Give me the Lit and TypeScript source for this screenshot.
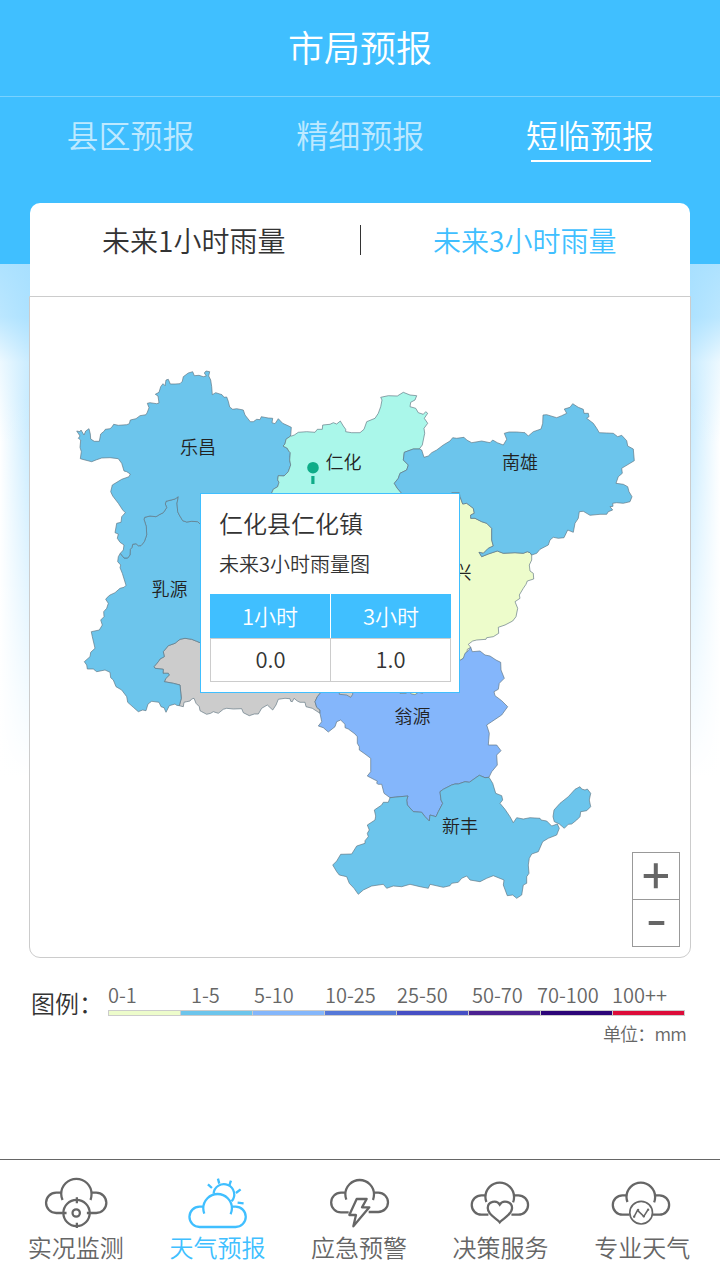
import { LitElement, html, svg, css } from "lit";
import { customElement, property } from "lit/decorators.js";

const sheet = (ox: number, oy: number, pts: string) =>
  pts.trim().split(/\s+/).map((p) => {
    const [x, y] = p.split(",").map(Number);
    return `${(ox + x / 3).toFixed(1)},${(oy + y / 3).toFixed(1)}`;
  }).join(" ");

const turn = (pts: string) => pts.trim().split(/\s+/).reverse().join(" ");

// Shared borders
const lechangRenhua = sheet(60, 360, "692,228 678,238 675,252 669,258 682,265 686,273 691,278 689,300 692,315 685,335 672,348 655,347 653,360 657,367 653,380 640,388 635,399 610,430");
const lechangRuyuan = sheet(60, 360, "440,500 420,492 413,485 395,484 380,486 368,482 358,465 353,455 351,430 355,410 345,417 318,424 316,432 320,443 310,458 300,463 288,470 270,468 254,472 252,478 259,500 260,525 253,545 243,557 235,557 228,551 218,553 216,562 211,568 210,585 203,594 192,594 181,580");
const ruyuanCity = sheet(60, 540, "358,497 364,475 360,435 340,430 313,425 318,415 328,405 325,400 309,400 310,388 285,385 282,380 295,365 300,357 313,350 310,335 325,317 345,310 360,298 375,295 395,298 410,304 420,308 440,312");
const renhuaNanxiong = sheet(260, 370, "478,237 460,237 433,247 430,270 445,285 440,300 420,310 415,325 403,340 412,355 425,370 445,390");
const shixingNanxiong = sheet(440, 390, "30,330 35,308 58,308 60,320 68,342 80,340 100,355 103,370 92,375 92,385 105,385 125,395 140,400 155,415 155,450 160,468 145,475 130,490 117,487 125,500 145,492 172,483 190,490 225,488 250,490 262,485 270,488 275,495");
const cityWengyuan = sheet(300, 630, "60,250 60,240 50,232 45,215 52,200 62,188 70,160");
const wengyuanXinfeng = sheet(310, 750, "537,82 525,83 508,76 495,85 478,97 465,95 445,102 435,102 425,105 400,118 390,125 393,150 398,160 385,185 378,200 360,195 358,213 345,200 335,187 310,185 292,165 290,150 294,138 270,140 240,143");

const BLUE = "#6cc5ec";

const regions = [
  { fill: "#cccccc", pts: ruyuanCity + " 360,640 340,670 " + turn(cityWengyuan) + " " + turn(sheet(60, 540, "370,500 372,487 380,485 390,483 395,477 402,475 408,490 418,500 420,512 425,515 440,523 452,520 460,515 475,520 490,508 500,505 520,507 545,506 550,518 568,527 583,522 595,522 605,505 622,495 638,510 648,495 655,478 675,475 690,476 692,484 697,485 702,475 712,483 720,487 735,487 738,500 757,505")) },
  { fill: BLUE, pts: turn(lechangRuyuan) + " 230,560 230,630 " + turn(ruyuanCity) + " " + turn(sheet(60, 540, "181,40 175,50 173,65 182,75 180,83 187,100 198,136 192,142 180,145 165,158 150,165 142,172 137,178 145,190 140,205 131,215 132,230 122,240 127,255 118,270 94,275 97,290 105,325 92,337 90,350 73,365 80,375 82,387 100,387 110,395 135,390 150,397 152,413 160,420 168,440 185,450 200,470 203,487 220,502 235,515 248,510 258,512 264,492 275,484 297,487 303,500 312,503 318,517 328,497 345,492 350,496")) },
  { fill: BLUE, pts: sheet(60, 360, "50,213 60,215 63,210 72,225 77,213 87,206 91,222 92,237 103,244 118,244 122,222 133,213 136,208 150,206 155,202 161,193 175,196 200,194 208,191 211,180 228,176 240,167 258,164 262,157 267,143 262,130 270,128 290,131 297,129 294,108 286,103 297,97 302,80 309,71 315,77 318,60 325,58 331,72 345,72 360,71 367,64 370,50 385,39 398,35 403,47 417,46 430,50 439,48 433,39 438,33 449,35 446,48 452,60 455,80 457,104 467,98 486,104 492,112 500,111 505,124 509,141 518,148 530,146 550,150 555,165 571,185 580,185 590,178 600,179 604,170 625,174 638,175 636,188 645,191 655,176 668,190 684,197 694,202") + " " + lechangRenhua + " " + lechangRuyuan + " " + sheet(60, 360, "190,570 192,555 180,547 172,535 175,522 165,518 170,490 183,487 185,470 196,458 188,450 175,430 158,408 152,395 157,375 185,358 207,350 211,342 200,335 192,333 185,310 175,296 150,293 125,294 110,299 95,305 75,300 61,296 64,275 60,262 62,240 55,235 60,228") },
  { fill: "#aaf7ea", pts: sheet(260, 370, "95,198 103,195 115,187 140,185 165,187 172,178 187,178 188,165 210,163 220,158 230,162 241,153 250,168 257,178 257,185 275,188 300,188 312,178 320,155 345,145 355,130 362,110 366,90 362,82 385,77 412,78 430,67 450,75 470,77 465,90 452,97 450,110 467,115 475,128 490,133 497,125 503,130 493,145 503,160 492,175 494,190 487,225") + " " + renhuaNanxiong + " 300,520 " + turn(lechangRenhua) },
  { fill: "#edfccb", pts: shixingNanxiong + " " + sheet(440, 390, "275,510 268,525 270,543 280,550 281,567 262,573 258,583 250,595 238,615 240,625 225,635 233,655 228,680 218,693 195,705 175,712 176,730 160,740 140,743 138,748 110,750 98,753 85,763 92,772 82,778 80,795 70,805 60,812 30,815") },
  { fill: BLUE, pts: turn(renhuaNanxiong) + " " + sheet(260, 370, "485,240 492,262 505,258 515,248 530,240 550,225 570,213") + " " + sheet(440, 390, "38,143 50,145 72,142 80,150 95,158 125,153 150,158 158,150 172,158 190,165 200,148 193,130 207,126 230,126 255,128 265,138 280,125 303,117 308,100 309,75 320,74 350,83 365,77 380,70 373,57 390,52 398,41 415,52 430,58 432,70 445,70 447,80 440,85 460,100 470,115 478,128 500,129 520,130 533,140 545,136 560,152 563,168 580,177 583,212 570,220 545,235 547,250 535,260 528,280 550,283 563,290 567,305 576,320 570,335 550,340 530,338 518,340 519,349 510,350 518,360 505,365 500,373 480,373 450,376 430,364 418,365 415,385 405,400 400,427 383,420 372,443 355,445 340,442 330,450 325,465 300,478 290,490") + " " + turn(shixingNanxiong) },
  { fill: "#84b6fb", pts: sheet(300, 630, "440,100 478,92 490,85 495,70 505,62 512,52 517,65 540,63 555,75 570,78 588,90 602,97 603,120 613,145 598,160 595,178 582,185 585,197 605,212 623,230 605,255 575,275 560,285 568,310 565,345 590,345 603,362 590,375 592,405 575,425") + " " + wengyuanXinfeng + " " + sheet(310, 750, "222,130 215,103 205,103 200,100 202,93 195,90 172,78 182,65 182,25 165,12 148,0") + " " + sheet(300, 630, "178,350 172,340 172,320 165,312 145,297 135,293 135,283 122,270 110,275 105,290 85,306 70,293 55,288 65,275") + " " + cityWengyuan },
  { fill: BLUE, pts: turn(wengyuanXinfeng) + " " + sheet(310, 750, "548,100 557,130 575,137 578,150 570,160 585,178 600,200 610,218 620,203 640,207 660,203 690,205 693,210 710,213 725,228 742,222 748,235 740,255 715,265 698,275 685,305 665,312 658,325 655,345 657,370 650,380 650,400 640,405 635,435 620,445 608,435 592,437 580,405 582,390 550,377 530,385 510,395 480,390 470,378 455,385 445,397 425,400 420,407 400,412 360,403 355,415 330,410 300,403 275,410 250,408 230,415 220,403 185,408 160,420 145,433 132,415 118,400 110,380 88,375 80,365 68,345 80,333 92,313 125,312 140,288 165,280 165,272 175,260 172,250 178,240 172,225 195,210 197,198 193,180 215,165 220,157 235,157") },
  { fill: BLUE, pts: sheet(310, 750, "810,110 815,117 825,120 832,117 842,130 838,150 842,170 830,182 812,185 810,200 800,210 785,222 775,223 763,235 748,222 733,215 729,200 732,180 750,160 775,140 795,118") },
  { fill: "#cccccc", pts: sheet(300, 630, "118,180 118,193 140,195 152,202 158,193 158,180") },
  { fill: "#edfccb", pts: sheet(300, 630, "300,180 300,190 318,190 325,184 335,192 345,194 355,187 368,190 368,180") },
];

const places: [string, number, number][] = [
  ["乐昌", 198, 453.5], ["仁化", 343.5, 468.5], ["南雄", 520, 468.5], ["乳源", 169.5, 595.5],
  ["始兴", 453.5, 578.5], ["翁源", 412.5, 722.5], ["新丰", 460, 832.5],
];

const legend = [
  { label: "0-1", color: "#edfccb", shift: 0 },
  { label: "1-5", color: "#6cc5ec", shift: 11 },
  { label: "5-10", color: "#84b6fb", shift: 2 },
  { label: "10-25", color: "#5578d8", shift: 1 },
  { label: "25-50", color: "#464fc4", shift: 1 },
  { label: "50-70", color: "#4b2191", shift: 4 },
  { label: "70-100", color: "#2c0578", shift: -3 },
  { label: "100++", color: "#dc0c39", shift: 0 },
];

const navItems = [
  {
    label: "实况监测", box: "107.4 60 240 180",
    icon: svg`<path d="M185 128H168a30.5 30.5 0 0 0 0 61H188M272 128H288a30.5 30.5 0 0 1 0 61H270M187 150Q183 140 183 132A45.5 45.5 0 0 1 274 132Q274 142 271 150"/><circle cx="229" cy="189" r="39.5"/><circle cx="228" cy="189" r="11"/><path d="M230 142V160M230 218V234M188 189H199M260 189H271"/>`,
  },
  {
    label: "天气预报", box: "532.2 60 240 180", active: true,
    icon: svg`<path d="M611 170H600a30.5 30.5 0 0 0 0 61H708a30.5 30.5 0 0 0 0-61H697M614 191Q611 182 611 175A43 43 0 0 1 697 175Q697 184 693 193M642 131A31 31 0 1 1 696 154"/><path stroke-width="7" d="M625 103L637 114M655 86L659 101M694 92L689 107M723 118L709 129M714 158L732 160"/>`,
  },
  {
    label: "应急预警", box: "957 60 240 180",
    icon: svg`<path d="M1037 128H1023a29.5 29.5 0 0 0 0 59H1046M1122 128H1135a29 29 0 0 1 0 58H1106M1039 149Q1036 141 1036 133A43 43 0 0 1 1122 133Q1122 142 1119 150"/><path stroke-linejoin="round" d="M1070 147H1100L1086 172H1108L1060 229L1068 195H1048Z"/>`,
  },
  {
    label: "决策服务", box: "303.8 60 240 180",
    icon: svg`<path d="M378 136H365a29 29 0 0 0 0 58H386M463 136H476a29 29 0 0 1 0 58H455M380 156Q377 148 377 141A43 43 0 0 1 463 141Q463 150 460 157M420 217C412 206 384 195 384 174C384 154 411 149 420 164C429 149 457 154 457 174C457 195 428 206 420 217Z"/>`,
  },
  {
    label: "专业天气", box: "726.6 60 240 180",
    icon: svg`<path d="M801 136H788a29 29 0 0 0 0 58H809M886 136H899a29 29 0 0 1 0 58H879M803 156Q800 148 800 141A43 43 0 0 1 886 141Q886 150 883 157"/><circle cx="844" cy="188" r="34" stroke-width="5"/><path stroke-width="4.5" d="M823 200L833 181L852 199L864 180"/><g fill="currentColor" stroke="none"><circle cx="823" cy="200" r="3.5"/><circle cx="835" cy="180" r="3.5"/><circle cx="852" cy="199" r="3.5"/><circle cx="865" cy="179" r="3.5"/></g>`,
  },
];

@customElement("rain-map")
class RainMap extends LitElement {
  static styles = css`
    :host { display: block; position: relative; height: 660px; border: 1px solid #ccc; border-radius: 0 0 11px 11px; background: #fff; }
    .map { display: block; width: 660px; height: 660px; }
    .region { stroke: #5d7380; stroke-opacity: .65; stroke-width: 1; stroke-linejoin: round; }
    .place { font-size: 18px; fill: #222; text-anchor: middle; }
    .pin { fill: #0eac88; }
    .popup { position: absolute; left: 170px; top: 196px; width: 260px; height: 200px; box-sizing: border-box; border: 1px solid #40bfff; background: #fff; padding: 10px 8px 0 9px; color: #333; }
    .name { font-size: 24px; line-height: 38px; padding-left: 9px; }
    .sub { font-size: 20px; line-height: 44px; padding-left: 9px; margin-bottom: 8px; }
    .table { display: grid; grid-template-columns: 120px 121px; text-align: center; font-size: 22px; }
    .th { background: #40bfff; color: #fff; height: 44px; line-height: 42px; }
    .th + .th { border-left: 1px solid #fff; }
    .td { box-sizing: border-box; height: 44px; line-height: 39px; border: 1px solid #ccc; border-right: 0; }
    .td:last-child { border-right: 1px solid #ccc; }
    .zoom { position: absolute; right: 10px; bottom: 10px; width: 48px; height: 95px; box-sizing: border-box; border: 1px solid #999; background: #fff; display: grid; grid-template-rows: 46px 46px; row-gap: 1px; }
    .btn { display: block; width: 46px; height: 46px; stroke: #666; stroke-width: 4; }
    .btn + .btn { box-shadow: 0 -1px #999; }
  `;
  render() {
    return html`
      <svg class="map" viewBox="30 297 660 660">
        ${regions.map((r) => svg`<polygon class="region" fill=${r.fill} points=${r.pts} />`)}
        ${places.map(([n, x, y]) => svg`<text class="place" x=${x} y=${y}>${n}</text>`)}
        <circle class="pin" cx="313" cy="467.7" r="5.8" />
        <rect class="pin" x="311.3" y="476" width="3.2" height="8" />
      </svg>
      <div class="popup">
        <div class="name">仁化县仁化镇</div>
        <div class="sub">未来3小时雨量图</div>
        <div class="table">
          <div class="th">1小时</div><div class="th">3小时</div>
          <div class="td">0.0</div><div class="td">1.0</div>
        </div>
      </div>
      <div class="zoom">
        <svg class="btn" viewBox="0 0 46 46"><path d="M10.7 23H35M22.8 10.3V35.3" /></svg>
        <svg class="btn" viewBox="0 0 46 46"><path d="M15.7 23H31.3" /></svg>
      </div>`;
  }
}

@customElement("rain-legend")
class RainLegend extends LitElement {
  static styles = css`
    :host { display: flex; padding: 24px 35px 0 31px; color: #666; }
    .title { width: 77px; font-size: 24px; line-height: 42px; color: #333; white-space: nowrap; }
    .scale { display: grid; grid-template-columns: repeat(8, 72px); }
    .label { font-size: 20px; line-height: 26px; white-space: nowrap; height: 28px; }
    .bar { height: 6px; box-sizing: border-box; border: 1px solid #ccc; border-right: 0; }
    .bar.end { width: 73px; border-right: 1px solid #ccc; }
    .unit { grid-column: 1 / -1; text-align: right; font-size: 18px; line-height: 35px; letter-spacing: -.8px; margin-right: -2px; }
  `;
  render() {
    return html`
      <div class="title">图例：</div>
      <div class="scale">
        ${legend.map((l) => html`<div class="label" style="margin-left:${l.shift}px">${l.label}</div>`)}
        ${legend.map((l, i) => html`<div class="bar ${i === legend.length - 1 ? "end" : ""}" style="background:${l.color}"></div>`)}
        <div class="unit">单位：mm</div>
      </div>`;
  }
}

@customElement("app-root")
class AppRoot extends LitElement {
  @property({ type: Number }) tab = 2;
  static styles = css`
    :host { display: flex; flex-direction: column; width: 720px; height: 1280px; overflow: hidden; background: #fff; font-family: "Noto Sans CJK SC", sans-serif; font-weight: 350; color: #333; }
    .title { height: 96px; line-height: 92px; text-align: center; font-size: 36px; color: #fff; background: #40bfff; border-bottom: 1px solid #79d2ff; }
    .backdrop {
      flex: none; height: 861px;
      background:
        linear-gradient(#40bfff 167px, transparent 167px),
        linear-gradient(rgba(165,223,255,.9) 167px, rgba(165,223,255,.75) 220px, rgba(210,239,255,.4) 265px, rgba(255,255,255,0) 345px),
        linear-gradient(rgba(255,255,255,0) 300px, #fff 680px),
        linear-gradient(90deg, #fff 0, #bfe8ff 32px, #bfe8ff 688px, #fff 720px);
    }
    .tabs { display: flex; justify-content: space-between; padding: 16px 66px 0 66.6px; height: 90px; font-size: 32px; }
    .tab { height: 47px; line-height: 43px; color: rgba(255,255,255,.68); }
    .tab.on { color: #fff; }
    .tab.on::after { content: ""; display: block; width: 120px; height: 2px; margin: 4px 0 0 5px; background: #fff; }
    .card { margin: 0 29px; }
    .hours { display: grid; grid-template-columns: 1fr 1px 1fr; height: 93px; margin: 0 1px; border-radius: 10px 10px 0 0; background: #fff; font-size: 28px; text-align: center; line-height: 75px; }
    .hours > span { padding-right: 2px; }
    .rule { background: #333; height: 30px; margin-top: 22px; }
    .hours > .next { color: #40bfff; padding-right: 1px; }
    .nav { margin-top: auto; height: 120px; border-top: 1px solid #666; display: grid; grid-template-columns: repeat(5, 1fr); padding: 0 7px 0 5px; }
    .item { display: flex; flex-direction: column; align-items: center; color: #666; font-size: 24px; line-height: 34px; padding-top: 10px; }
    .item.on { color: #40bfff; }
    .icon { width: 80px; height: 60px; fill: none; stroke: currentColor; stroke-width: 6.8; }
  `;
  render() {
    return html`
      <div class="title">市局预报</div>
      <div class="backdrop">
        <div class="tabs">
          ${["县区预报", "精细预报", "短临预报"].map((t, i) => html`<div class="tab ${i === this.tab ? "on" : ""}">${t}</div>`)}
        </div>
        <div class="card">
          <div class="hours"><span>未来1小时雨量</span><i class="rule"></i><span class="next">未来3小时雨量</span></div>
          <rain-map></rain-map>
        </div>
      </div>
      <rain-legend></rain-legend>
      <div class="nav">
        ${navItems.map((n) => html`<div class="item ${n.active ? "on" : ""}"><svg class="icon" viewBox=${n.box}>${n.icon}</svg><span>${n.label}</span></div>`)}
      </div>`;
  }
}
